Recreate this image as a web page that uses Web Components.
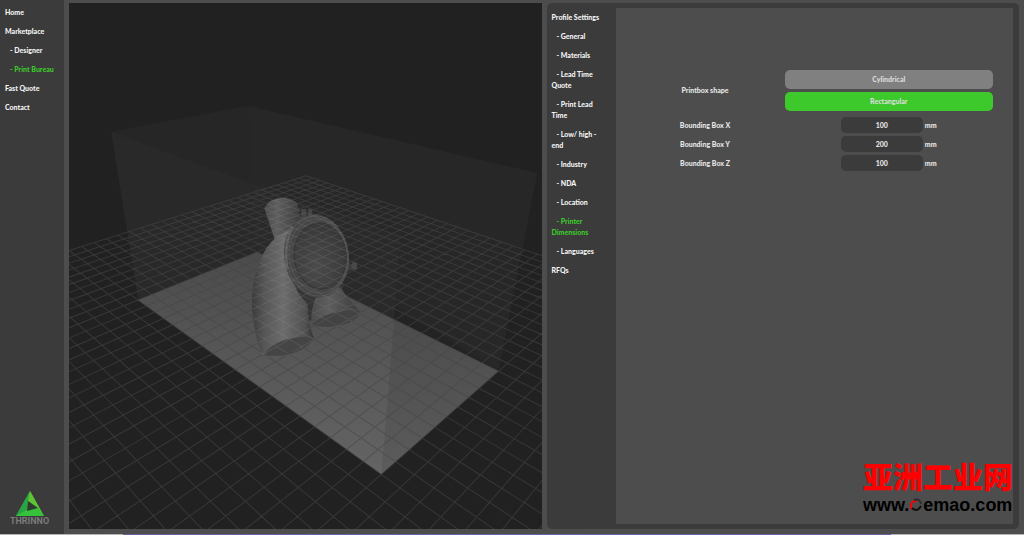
<!DOCTYPE html>
<html lang="en">
<head>
<meta charset="utf-8">
<meta name="viewport" content="width=device-width, initial-scale=1">
<title>Thrinno - Print Bureau</title>
<style>
  body {
    margin: 0;
    font-family: Lato, "Open Sans", sans-serif;
    font-size: 7px;
    font-weight: 900;
    line-height: 11px;
    color: #e6e6e6;
    background: #4d4d4d;
  }
</style>
</head>
<body>
<app-shell>
  <side-nav slot="nav" label="Main">
    <nav-item>Home</nav-item>
    <nav-item>Marketplace</nav-item>
    <nav-item sub>- Designer</nav-item>
    <nav-item sub current>- Print Bureau</nav-item>
    <nav-item>Fast Quote</nav-item>
    <nav-item>Contact</nav-item>
    <brand-logo slot="footer">THRINNO</brand-logo>
  </side-nav>
  <print-viewer slot="viewer"></print-viewer>
  <settings-panel slot="settings">
    <side-nav slot="nav" label="Profile">
      <nav-item>Profile Settings</nav-item>
      <nav-item sub>- General</nav-item>
      <nav-item sub>- Materials</nav-item>
      <nav-item sub>- Lead Time Quote</nav-item>
      <nav-item sub>- Print Lead Time</nav-item>
      <nav-item sub>- Low/ high - end</nav-item>
      <nav-item sub>- Industry</nav-item>
      <nav-item sub>- NDA</nav-item>
      <nav-item sub>- Location</nav-item>
      <nav-item sub current>- Printer Dimensions</nav-item>
      <nav-item sub>- Languages</nav-item>
      <nav-item>RFQs</nav-item>
    </side-nav>
    <shape-picker label="Printbox shape">
      <shape-option>Cylindrical</shape-option>
      <shape-option selected>Rectangular</shape-option>
    </shape-picker>
    <dimension-field value="100" unit="mm">Bounding Box X</dimension-field>
    <dimension-field value="200" unit="mm">Bounding Box Y</dimension-field>
    <dimension-field value="100" unit="mm">Bounding Box Z</dimension-field>
    <site-mark slot="mark">亚洲工业网</site-mark>
  </settings-panel>
</app-shell>

<script>
/**
 * Creates a template element from a string of markup.
 */
const createTemplate = (markup) => {
  const template = document.createElement('template')
  template.innerHTML = markup
  return template
}

/**
 * Base class, clones the template of the subclass into an open shadow root.
 */
class BaseElement extends HTMLElement {
  constructor () {
    super()
    this.attachShadow({ mode: 'open' })
      .appendChild(this.constructor.template.content.cloneNode(true))
  }
}

customElements.define('app-shell',
  class extends BaseElement {
    static template = createTemplate(`
<style>
  :host {
    display: grid;
    grid-template-rows: 1fr 1px;
    min-height: 100vh;
  }

  .columns {
    display: grid;
    grid-template-columns: 64px 1fr 1fr;
    column-gap: 5px;
    padding-right: 5px;
  }

  main, section {
    display: grid;
    min-width: 0;
    padding: 3px 0 5px;
  }

  .strip {
    background: linear-gradient(to right, #b4b4b4 12%, #6b5f9e 12%, #5f68a8 50%, #6b5f9e 87%, #b4b4b4 87%);
  }
</style>
<div class="columns">
  <slot name="nav"></slot>
  <main><slot name="viewer"></slot></main>
  <section><slot name="settings"></slot></section>
</div>
<div class="strip"></div>
`)
  })

customElements.define('side-nav',
  class extends BaseElement {
    static template = createTemplate(`
<style>
  :host {
    display: flex;
    flex-direction: column;
    justify-content: space-between;
    background: #3b3b3b;
  }

  nav {
    display: flex;
    flex-direction: column;
    gap: 8px;
    padding: var(--nav-padding, 7px 5px);
  }
</style>
<nav><slot></slot></nav>
<slot name="footer"></slot>
`)

    connectedCallback () {
      this.shadowRoot.querySelector('nav').setAttribute('aria-label', this.getAttribute('label'))
    }
  })

customElements.define('nav-item',
  class extends BaseElement {
    static template = createTemplate(`
<style>
  :host {
    display: block;
  }

  :host([sub]) {
    text-indent: 5px;
  }

  a {
    display: block;
    color: #f4f4f4;
    text-decoration: none;
  }

  :host([current]) a {
    color: #3dc92b;
  }
</style>
<a href="#"><slot></slot></a>
`)
  })

customElements.define('brand-logo',
  class extends BaseElement {
    static template = createTemplate(`
<style>
  :host {
    display: flex;
    flex-direction: column;
    align-items: center;
    padding: 0 5px 7px 0;
    font-family: Roboto, sans-serif;
    font-size: 9px;
    font-weight: 700;
    color: #7a7a7a;
  }
</style>
<svg width="28" height="25" viewBox="0 0 28 25" aria-hidden="true">
  <path d="M14 0 L28 25 H0 Z" fill="#3fb83c"/>
  <path d="M14 0 L0 25 L11 19 L12 10 Z" fill="#27a544"/>
  <path d="M14 0 L28 25 L22 17 L12 10 Z" fill="#62c235"/>
  <path d="M0 25 L11 19 L22 17 L28 25 Z" fill="#36c33b"/>
  <path d="M12 10 L22 17 L11 20 Z" fill="#2f3b2f"/>
</svg>
<slot></slot>
`)
  })

customElements.define('print-viewer',
  class extends BaseElement {
    static template = createTemplate(`
<style>
  :host {
    display: block;
    position: relative;
    background: #212121;
    overflow: hidden;
  }

  svg {
    position: absolute;
    width: 100%;
    height: 100%;
  }

  .grid {
    fill: none;
    stroke: #464646;
    stroke-opacity: .6;
  }

  .overlay {
    stroke: #b4b4b4;
    stroke-opacity: .14;
  }
</style>
<svg viewBox="69 3 472 526" preserveAspectRatio="xMidYMid slice" role="img" aria-label="Model in print box">
  <defs>
    <linearGradient id="plate" x1="0" y1="0" x2="0" y2="1">
      <stop offset="0" stop-color="#4b4b4b"/>
      <stop offset="1" stop-color="#646464"/>
    </linearGradient>
    <linearGradient id="tube" x1="0" y1="0" x2="1" y2="0">
      <stop offset="0" stop-color="#3c3c3c"/>
      <stop offset=".2" stop-color="#565656"/>
      <stop offset=".5" stop-color="#6c6c6c"/>
      <stop offset=".85" stop-color="#525252"/>
      <stop offset="1" stop-color="#333"/>
    </linearGradient>
    <linearGradient id="pipe" x1="0" y1="0" x2="1" y2="0">
      <stop offset="0" stop-color="#4c4c4c"/>
      <stop offset=".35" stop-color="#5e5e5e"/>
      <stop offset="1" stop-color="#3a3a3a"/>
    </linearGradient>
    <radialGradient id="lens" cx=".4" cy=".65" r=".65">
      <stop offset="0" stop-color="#4b4b4b"/>
      <stop offset="1" stop-color="#383838"/>
    </radialGradient>
    <clipPath id="model-clip">
      <path d="M264 208 Q270 197 288 198 L297 203 L301 213 Q313 212 325 217 Q350 227 348 265 Q347 280 341 289 Q349 300 361 313 Q353 326 330 327 Q315 328 311 320 Q309 330 314 339 Q300 355 262 356 Q246 310 255 275 Q261 249 275 239 Z"/>
    </clipPath>
  </defs>
  <path d="M111 132 L248 106 L537 173 L498 371 L381 474 L138 300 Z" fill="#fff" fill-opacity=".022"/>
  <path d="M111 132 L400 238 L381 474 L138 300 Z" fill="#fff" fill-opacity=".014"/>
  <path d="M248 106 L537 173 L498 371 L257 252 Z" fill="#fff" fill-opacity=".008"/>
  <path d="M138 300 L257 252 L498 371 L381 474 Z" fill="url(#plate)"/>
  <path d="M395 306 L498 371 L381 474 Z" fill="#000" fill-opacity=".08"/>
  <path class="grid"/>
  <g class="model">
    <path d="M301 209 h5 v11 h-5 Z M308 209 h4 v8 h-4 Z" fill="#464646"/>
    <path d="M347 262 L352 265 V269 L347 272 Z" fill="#3e3e3e"/>
    <ellipse cx="354" cy="266" rx="3" ry="4" fill="#484848"/>
    <path d="M264 208 Q270 197 286 198 Q297 200 298 207 L302 226 L275 241 Z" fill="url(#pipe)"/>
    <path d="M318 292 L341 288 Q348 301 361 312 Q355 325 332 327 Q316 328 311 321 Q312 302 318 292 Z" fill="url(#pipe)"/>
    <path d="M311 324 Q322 314 341 311 Q358 307 361 312 Q354 325 332 327 Q316 328 311 324 Z" fill="#434343" stroke="#5b5b5b" stroke-width=".5"/>
    <path d="M290 270 L318 292 Q311 304 311 321 L306 318 Z" fill="#353535"/>
    <path d="M275 238 L300 222 Q288 244 290 268 Q292 290 307 303 Q309 328 314 339 Q302 354 262 356 Q246 310 255 275 Q261 251 275 238 Z" fill="url(#tube)"/>
    <path d="M262 356 Q271 342 292 338 Q309 334 314 339 Q304 353 281 356 Z" fill="#454545" stroke="#5a5a5a" stroke-width=".5"/>
    <ellipse cx="316" cy="256" rx="32" ry="42" fill="#454545" transform="rotate(-8 316 256)"/>
    <g fill="none" stroke="#5e5e5e" stroke-opacity=".6">
      <ellipse cx="317" cy="256" rx="31" ry="40" transform="rotate(-8 317 256)"/>
      <ellipse cx="318" cy="256" rx="29" ry="37" transform="rotate(-8 318 256)"/>
    </g>
    <ellipse cx="320" cy="256" rx="26" ry="33" fill="url(#lens)" stroke="#353535" transform="rotate(-6 320 256)"/>
    <path d="M292 226 Q283 248 287 270" fill="none" stroke="#707070" stroke-opacity=".5" stroke-width="3"/>
  </g>
  <path class="grid overlay" clip-path="url(#model-clip)"/>
</svg>
`)

    connectedCallback () {
      const path = this.gridPath()
      this.shadowRoot.querySelectorAll('.grid').forEach(grid => grid.setAttribute('d', path))
    }

    /**
     * Projects a point on the floor (mm, from the centre of the plate) to the view.
     */
    project (x, y) {
      const u = (x + 100) / 200
      const v = (y + 50) / 100
      const w = 1 - 0.3361 * u + 0.1714 * v
      return [
        ((138 + 114.95 * u + 163.1 * v) / w).toFixed(1),
        ((300 + 14.8 * u - 4.8 * v) / w).toFixed(1)
      ].join(' ')
    }

    gridPath () {
      const half = 200
      const step = 10
      let path = ''
      for (let i = -half; i <= half; i += step) {
        path += `M${this.project(i, -half)} L${this.project(i, half)}`
        path += `M${this.project(-half, i)} L${this.project(half, i)}`
      }
      return path
    }
  })

customElements.define('settings-panel',
  class extends BaseElement {
    static template = createTemplate(`
<style>
  :host {
    display: grid;
    grid-template-columns: 69px 1fr;
    padding: 5px 6px 5px 0;
    border-radius: 5px;
    background: #3b3b3b;
    --nav-padding: 4px 12px 7px 5px;
  }

  .content {
    position: relative;
    display: flex;
    flex-direction: column;
    gap: 3px;
    padding: 62px 20px;
    background: #4d4d4d;
  }

  ::slotted([slot="mark"]) {
    position: absolute;
    right: 0;
    bottom: 9px;
  }
</style>
<slot name="nav"></slot>
<div class="content">
  <slot></slot>
  <slot name="mark"></slot>
</div>
`)
  })

customElements.define('shape-picker',
  class extends BaseElement {
    static template = createTemplate(`
<style>
  :host {
    display: grid;
    grid-template-columns: 2fr 3fr;
    column-gap: 10px;
    align-items: center;
    text-align: center;
    padding-bottom: 3px;
  }

  .options {
    display: flex;
    flex-direction: column;
    gap: 3px;
  }
</style>
<span id="label"></span>
<div class="options" role="group" aria-labelledby="label"><slot></slot></div>
`)

    connectedCallback () {
      this.shadowRoot.querySelector('#label').textContent = this.getAttribute('label')
      this.addEventListener('click', (event) => {
        const option = event.target.closest('shape-option')
        if (!option) return
        this.querySelectorAll('shape-option').forEach(item => {
          item.toggleAttribute('selected', item === option)
        })
      })
    }
  })

customElements.define('shape-option',
  class extends BaseElement {
    static template = createTemplate(`
<style>
  :host {
    display: block;
  }

  button {
    display: block;
    width: 100%;
    height: 19px;
    padding: 0;
    border: none;
    border-radius: 5px;
    font: inherit;
    color: #dcdcdc;
    background: #808080;
    cursor: pointer;
  }

  :host([selected]) button {
    background: #3dc92b;
  }
</style>
<button type="button"><slot></slot></button>
`)

    static get observedAttributes () {
      return ['selected']
    }

    attributeChangedCallback () {
      this.shadowRoot.querySelector('button').setAttribute('aria-pressed', this.hasAttribute('selected'))
    }
  })

customElements.define('dimension-field',
  class extends BaseElement {
    static template = createTemplate(`
<style>
  :host {
    display: grid;
    grid-template-columns: 2fr 3fr;
    column-gap: 10px;
    align-items: center;
    text-align: center;
  }

  .value {
    display: flex;
    justify-content: center;
    align-items: center;
    gap: 2px;
  }

  input {
    box-sizing: border-box;
    width: 82px;
    height: 16px;
    padding: 0 5px;
    border: none;
    border-radius: 5px;
    font: inherit;
    text-align: center;
    color: #e6e6e6;
    background: #3b3b3b;
  }
</style>
<label for="size"><slot></slot></label>
<div class="value">
  <input id="size" type="text" inputmode="numeric">
  <span class="unit"></span>
</div>
`)

    connectedCallback () {
      this.shadowRoot.querySelector('input').value = this.getAttribute('value')
      this.shadowRoot.querySelector('.unit').textContent = this.getAttribute('unit')
    }
  })

customElements.define('site-mark',
  class extends BaseElement {
    static template = createTemplate(`
<style>
  :host {
    display: block;
    font-family: "Noto Sans CJK SC", sans-serif;
    font-size: 30px;
    font-weight: 900;
    line-height: 40px;
    color: #f00;
  }

  .address {
    display: flex;
    align-items: center;
    gap: 1px;
    font-family: "Liberation Sans", Arial, sans-serif;
    font-size: 18px;
    font-weight: 700;
    line-height: 20px;
    color: #000;
  }
</style>
<slot></slot>
<div class="address">
  <span>www.</span>
  <svg width="12" height="14" viewBox="0 0 12 14" aria-hidden="true">
    <path d="M7 3 A5 5 0 0 0 2 11" fill="none" stroke="#f00" stroke-width="2"/>
    <path d="M2 10 Q7 15 11 8" fill="none" stroke="#111" stroke-width="2"/>
    <path d="M4 2 Q10 0 11 6" fill="none" stroke="#2c2c2c" stroke-width="2"/>
  </svg>
  <span>emao.com</span>
</div>
`)
  })
</script>
</body>
</html>
